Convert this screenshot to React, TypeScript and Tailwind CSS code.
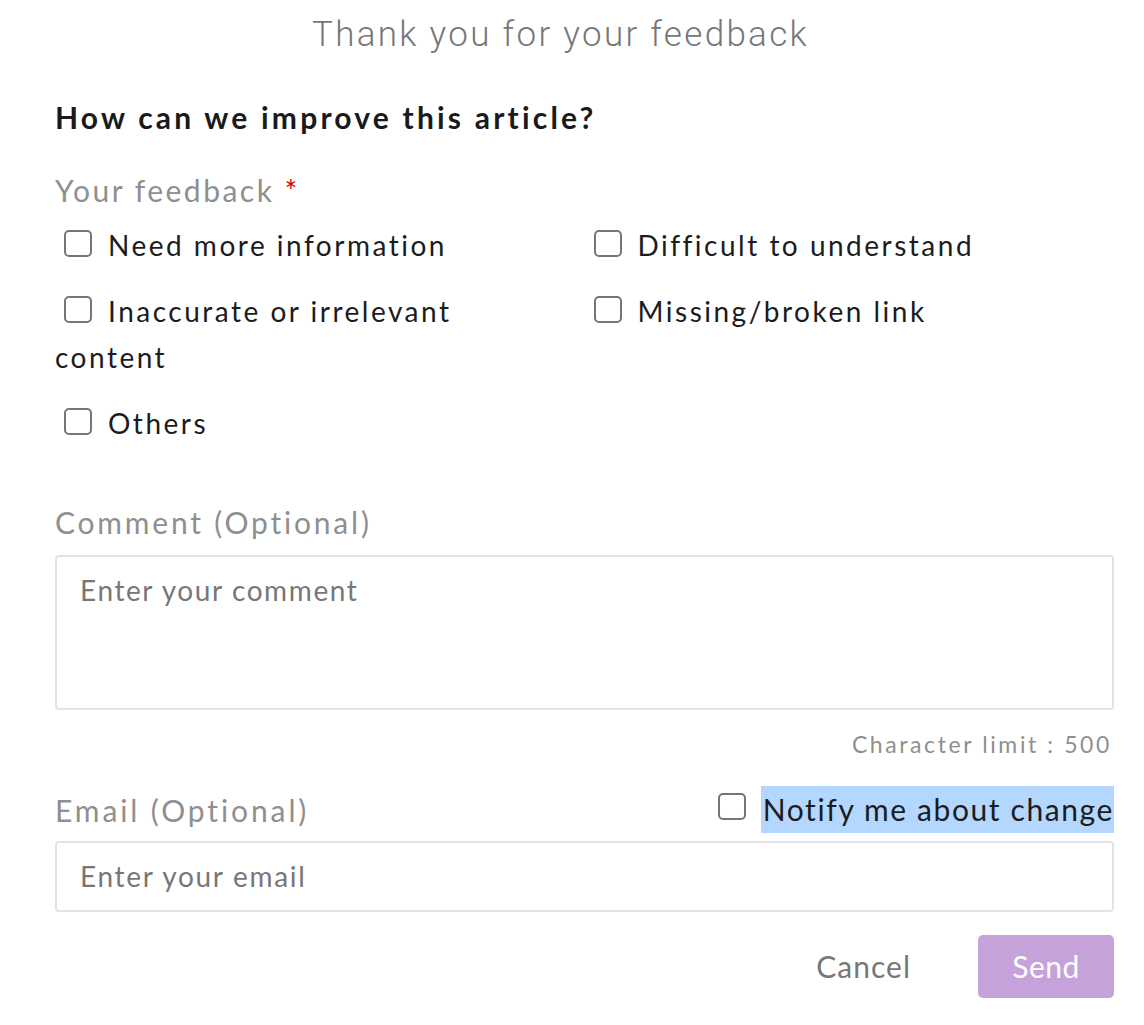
import React from "react";

function Box() {
  return <span className="inline-block shrink-0 w-[28px] h-[27px] rounded-[5px] border-2 border-[#767676] bg-white align-middle" />;
}

function Option({ label }: { label: string }) {
  return (
    <div className="text-[28px] leading-[46px] tracking-[2.5px] text-[#1c1c1c]">
      <span className="inline-block ml-[9px] mr-[16px] relative -top-[5px]"><Box /></span>
      {label}
    </div>
  );
}

export default function App() {
  return (
    <div className="w-[1144px] h-[1025px] bg-white font-['Lato',sans-serif] overflow-hidden">
      <div className="pt-[14px] text-center pr-[23px] font-['Roboto',sans-serif] font-light text-[35px] leading-[42px] text-[#777] tracking-[2.3px]">
        Thank you for your feedback
      </div>
      <div className="pl-[55px] pr-[30px]">
        <div className="mt-[41px] text-[30px] leading-[40px] font-bold text-[#1a1a1a] tracking-[3.2px]">
          How can we improve this article?
        </div>
        <div className="mt-[33px] text-[30px] leading-[40px] text-[#8f8f8f] tracking-[2.5px]">
          Your feedback <span className="text-[#e00000]">*</span>
        </div>
        <div className="mt-[12px] grid grid-cols-2 gap-y-[20px]">
          <Option label="Need more information" />
          <Option label="Difficult to understand" />
          <div className="pr-[60px]"><Option label="Inaccurate or irrelevant content" /></div>
          <Option label="Missing/broken link" />
          <Option label="Others" />
        </div>
        <div className="mt-[56px] text-[30px] leading-[40px] text-[#8f8f8f] tracking-[2.8px]">
          Comment (Optional)
        </div>
        <div className="mt-[13px] h-[155px] border-2 border-[#e3e3e3] rounded-[4px] pt-[13px] px-[23px] text-[28px] leading-[40px] text-[#777] tracking-[1.6px]">
          Enter your comment
        </div>
        <div className="mt-[19px] pr-[2px] text-right text-[23px] leading-[30px] text-[#8f8f8f] tracking-[2.6px]">
          Character limit : 500
        </div>
        <div className="mt-[27px] h-[47px] flex items-center justify-between">
          <div className="text-[30px] leading-[40px] text-[#8f8f8f] tracking-[2.9px]">Email (Optional)</div>
          <div className="flex items-center">
            <span className="mr-[15px] relative -top-[3px]"><Box /></span>
            <span className="bg-[#b3d7fe] h-[47px] flex items-center pl-[2px] text-[30px] text-[#1c1c1c] tracking-[1.6px]">Notify me about change</span>
          </div>
        </div>
        <div className="mt-[8px] h-[71px] border-2 border-[#e3e3e3] rounded-[4px] flex items-center pb-[2px] px-[23px] text-[28px] text-[#777] tracking-[1.7px]">
          Enter your email
        </div>
        <div className="mt-[23px] flex justify-end items-center">
          <button className="mr-[67px] text-[30px] text-[#777] tracking-[1px]">Cancel</button>
          <button className="w-[136px] h-[63px] rounded-[5px] bg-[#c5a3da] text-white text-[30px] tracking-[0.5px]">Send</button>
        </div>
      </div>
    </div>
  );
}
